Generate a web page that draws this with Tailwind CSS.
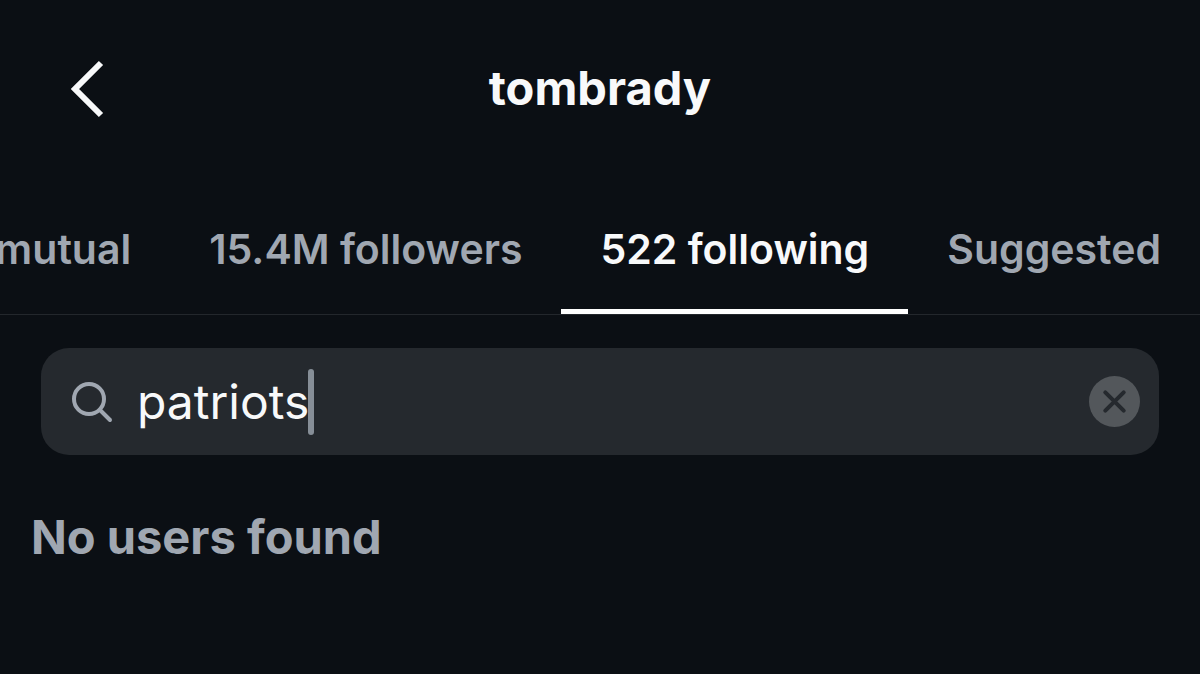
<!DOCTYPE html>
<html lang="en">
<head>
    <meta charset="UTF-8">
    <meta name="viewport" content="width=device-width, initial-scale=1.0">
    <title>tombrady</title>
    <script src="https://cdn.jsdelivr.net/npm/@tailwindcss/browser@4"></script>
</head>
<body class="min-h-screen overflow-x-hidden bg-[#0b0f14] font-['Inter',sans-serif] text-[#f8f9fa]">
    <!-- Header -->
    <header class="grid grid-cols-[1fr_auto_1fr] items-center px-16 pt-14">
        <button type="button" aria-label="Back" class="w-12">
            <svg class="h-16 w-12" viewBox="0 0 48 64" fill="none" stroke="currentColor" stroke-width="6">
                <path d="M37 7 L11 33 L37 59"/>
            </svg>
        </button>
        <h1 class="text-[47px] leading-16 font-bold">tombrady</h1>
    </header>

    <!-- Tabs -->
    <nav class="mt-16 flex justify-end border-b border-[#23272c] text-[41px] leading-12 font-semibold whitespace-nowrap text-[#a0a7b1]">
        <a href="#mutual" class="px-[39px] pt-[41px] pb-10">mutual</a>
        <a href="#followers" class="px-[39px] pt-[41px] pb-10">15.4M followers</a>
        <a href="#following" aria-current="page" class="border-b-[5px] border-white px-[39px] pt-[41px] pb-9 text-[#f8f9fa]">522 following</a>
        <a href="#suggested" class="px-[39px] pt-[41px] pb-10">Suggested</a>
    </nav>

    <main>
        <!-- Search -->
        <label class="mx-[41px] mt-[33px] flex h-[107px] items-center rounded-[28px] bg-[#25292e] pr-[19px] pl-7">
            <svg class="size-12 shrink-0 text-[#a0a7b1]" viewBox="0 0 48 48" fill="none" stroke="currentColor" stroke-width="4" stroke-linecap="round">
                <circle cx="20" cy="21" r="15"/>
                <path d="M31 32 L41 42"/>
            </svg>
            <input type="text" value="patriots" aria-label="Search" class="ml-5 field-sizing-content text-[48px] leading-16 outline-none">
            <span class="-ml-px h-[66px] w-[6px] rounded-sm bg-[#868e97]"></span>
            <button type="button" aria-label="Clear search" class="ml-auto">
                <svg class="size-[51px]" viewBox="0 0 50 50">
                    <circle cx="25" cy="25" r="25" fill="#53575b"/>
                    <path d="M16 16 L34 34 M34 16 L16 34" stroke="#25292e" stroke-width="4" stroke-linecap="round"/>
                </svg>
            </button>
        </label>

        <p class="mt-[50px] px-[31px] text-[47px] leading-16 font-bold text-[#a0a7b1]">No users found</p>
    </main>
</body>
</html>
